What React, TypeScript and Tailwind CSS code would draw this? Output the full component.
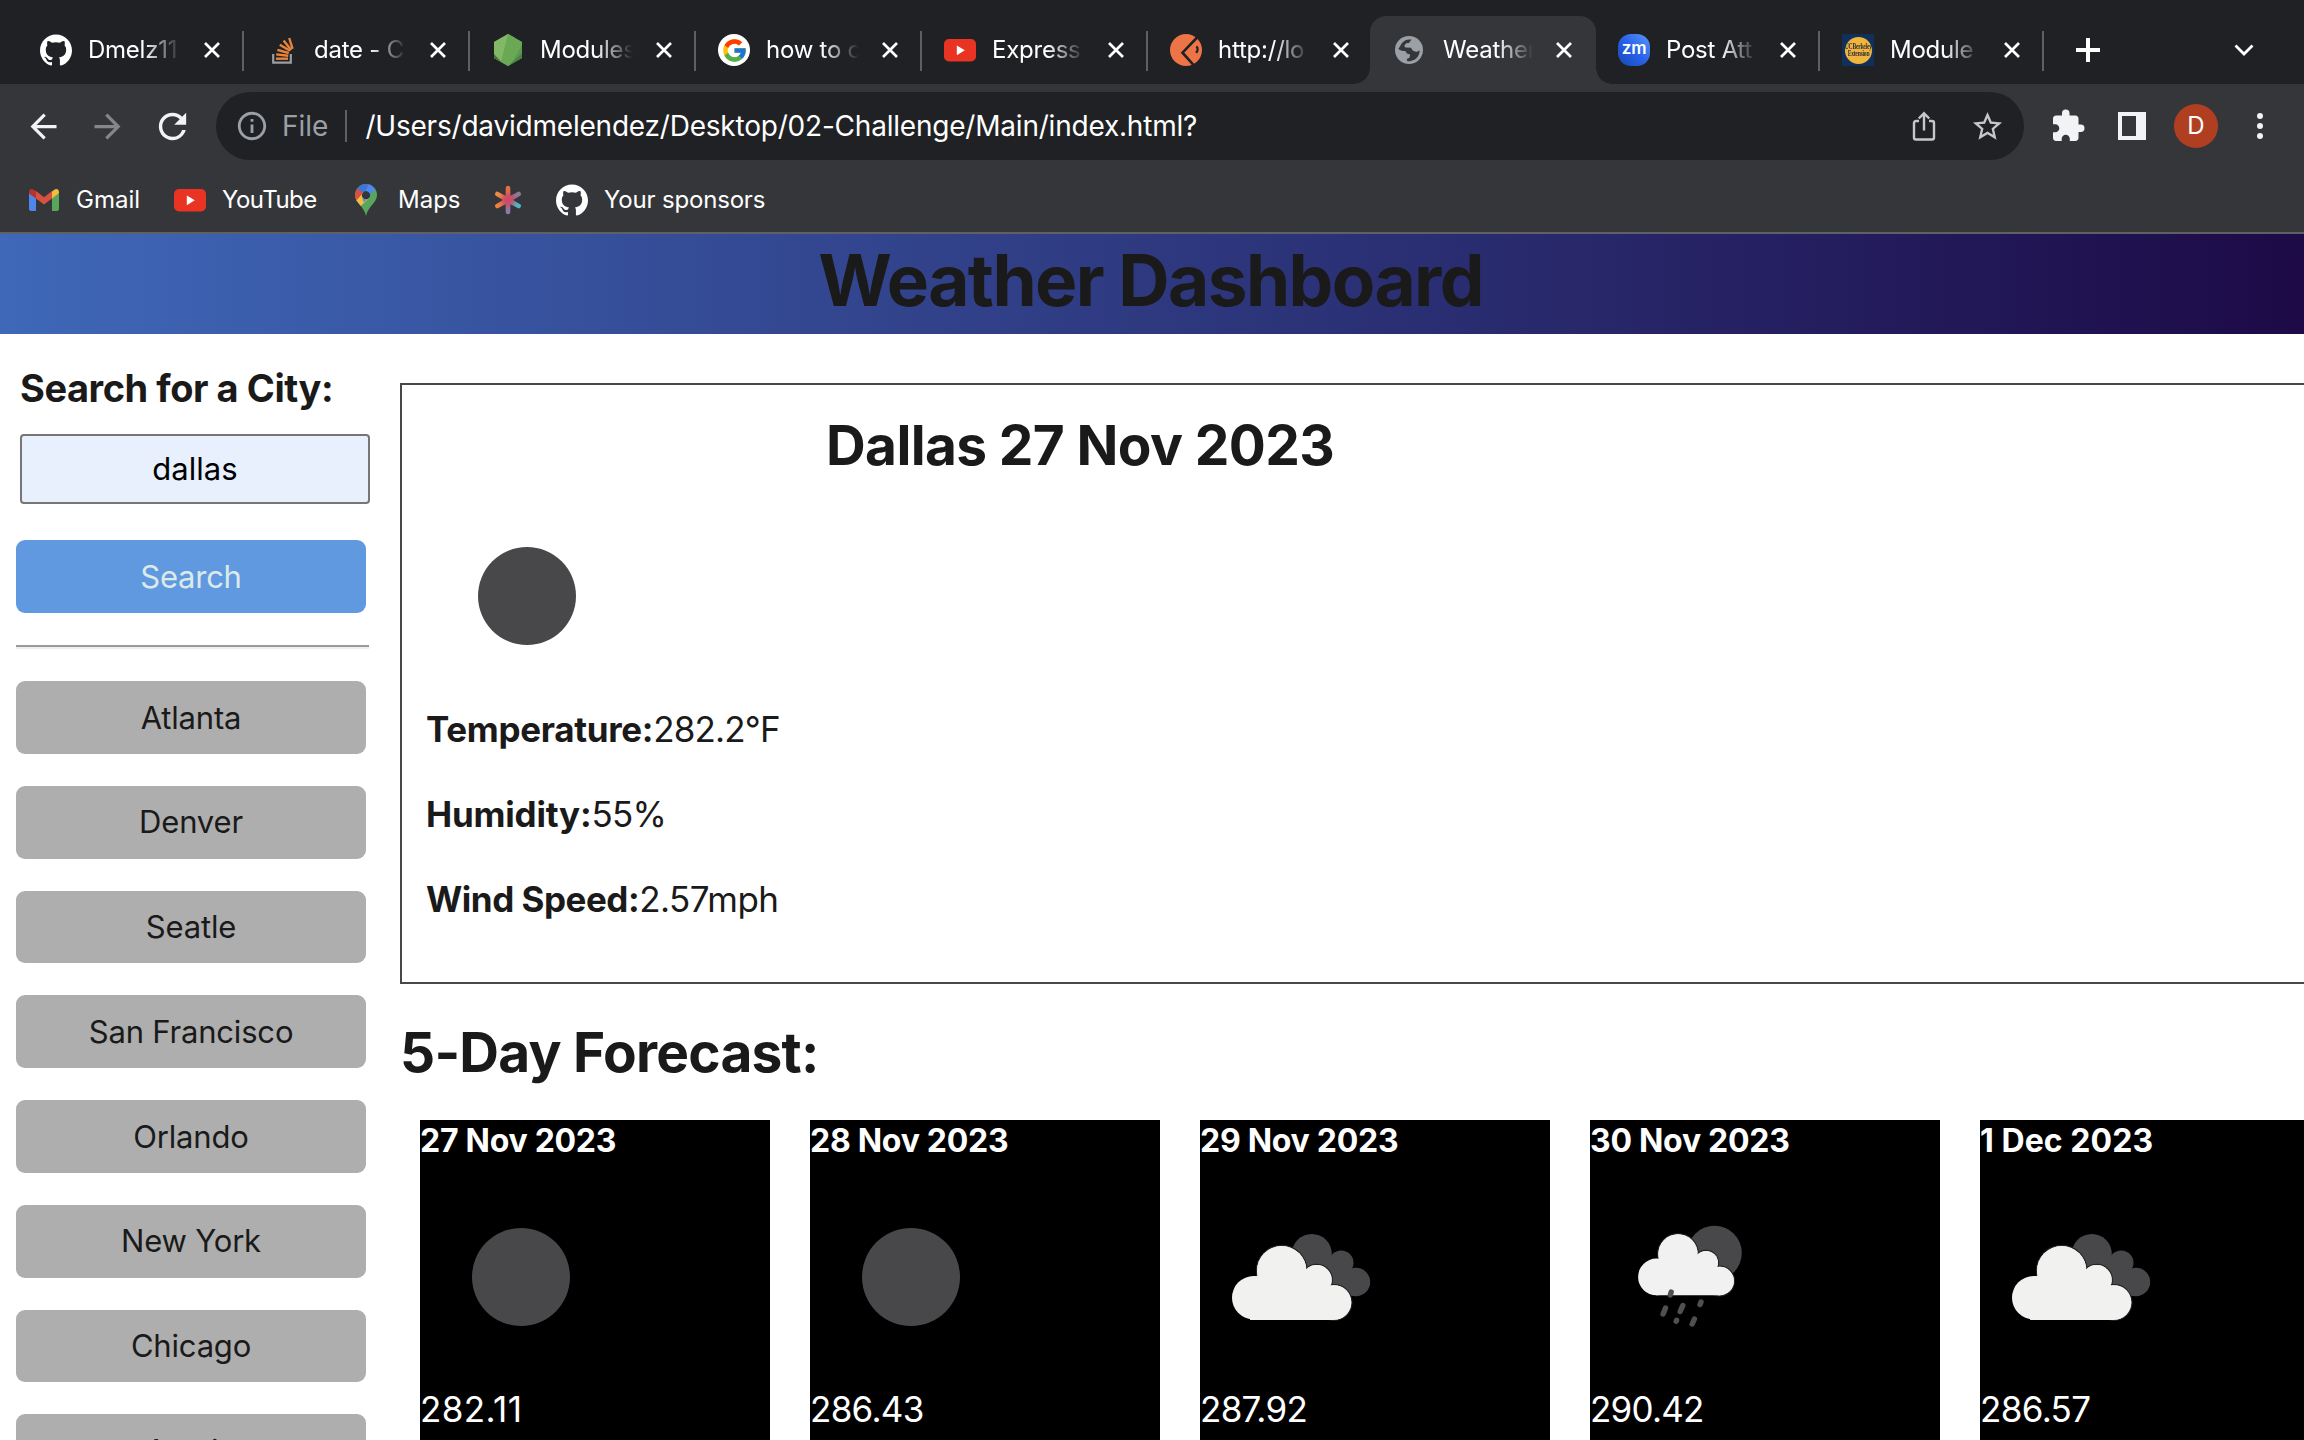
import type { ReactNode } from "react";
import { SiGithub } from "react-icons/si";
import { FcGoogle } from "react-icons/fc";
import {
  MdArrowBack,
  MdArrowForward,
  MdExtension,
  MdInfoOutline,
  MdRefresh,
  MdStarBorder,
} from "react-icons/md";

/* ---------- favicons ---------- */

function GitHubIcon() {
  return <SiGithub size={32} color="#ffffff" />;
}

function StackOverflowIcon() {
  return (
    <svg width="32" height="32" viewBox="0 0 32 32" fill="none">
      <path d="M7.2 20v8.6h17.6V20" stroke="#9a9da1" strokeWidth="2.2" />
      <g stroke="#e8843c" strokeWidth="2.4">
        <path d="M10 24.7h12" />
        <path d="M10.2 20.4l12 1.3" />
        <path d="M11.4 15.8l11.4 3.2" />
        <path d="M13.8 10.8l10.2 6" />
        <path d="M17.6 6.6l7.6 9.4" />
        <path d="M23.2 4l3.4 10.8" />
      </g>
    </svg>
  );
}

function NodeIcon() {
  return (
    <svg width="32" height="32" viewBox="0 0 32 32">
      <path d="M16 0l14 8v16l-14 8-14-8V8z" fill="#5c9a4c" />
      <path d="M16 0l7 4L9.500 28.200 2 24V8z" fill="#82b866" />
      <path d="M16 0l14 8v3L19 30.300 16 32l-7-4z" fill="#6aa856" />
      <path d="M2 20l8 8.500L2 24z" fill="#41783c" />
      <path d="M30 19v5l-14 8z" fill="#4a8543" />
    </svg>
  );
}

function GoogleIcon() {
  return (
    <span className="flex size-8 items-center justify-center rounded-full bg-white">
      <FcGoogle size={27} />
    </span>
  );
}

function YouTubeIcon() {
  return (
    <svg width="32" height="32" viewBox="0 0 32 32">
      <rect x="0" y="5" width="32" height="22.500" rx="5" fill="#e93323" />
      <path d="M12.800 11.400v9.800l8-4.900z" fill="#fff" />
    </svg>
  );
}

function PostmanIcon() {
  return (
    <svg width="32" height="32" viewBox="0 0 32 32" fill="none">
      <circle cx="16" cy="16" r="16" fill="#ec7446" />
      <path d="M29 1.500L12.500 18.700 24.500 32" stroke="#202124" strokeWidth="2.600" />
      <path d="M26.400 12.400c1.700 1.400 1.700 4.400-.4 6.400" stroke="#202124" strokeWidth="2.200" />
    </svg>
  );
}

function GlobeIcon() {
  return (
    <svg width="28" height="28" viewBox="0 0 28 28">
      <circle cx="14" cy="14" r="14" fill="#9aa0a6" />
      <path
        d="M16.500 3.600c-4-.7-7 .4-9.200 3.200C6 8.500 5 10.700 3.300 12.800c1.400 1.700 3.600 2.300 7 2.300l1.600 2.300 3.200 1-.6 3.300-2.800 1.300.7 2.300c4.800.3 9.300-1.800 11.200-6.200.6-1.500 1.100-3.100 1-4.600l-3.400 1.500-3.500-1.400-1.700-2.900-5.600-.1-1.200-1.800 2-2.600 2.800-.1z"
        fill="#35363a"
      />
    </svg>
  );
}

function ZoomIcon() {
  return (
    <span className="flex size-8 items-center justify-center rounded-[13px] bg-linear-to-bl from-[#5b97f7] via-[#2862ea] to-[#1846b4] pb-[3px] font-[Inter] text-[17px] leading-none font-semibold tracking-[-0.01em] text-white">
      zm
    </span>
  );
}

function BerkeleyIcon() {
  return (
    <span className="flex size-8 items-center justify-center bg-[#10305c]">
      <span className="flex size-[27px] flex-col items-center justify-center rounded-full bg-[#f2b53c] font-['Liberation_Serif'] text-[8px] leading-[7px] tracking-[-0.04em] whitespace-nowrap text-[#2b3040]">
        <span className="scale-x-[0.7] font-bold">UCBerkeley</span>
        <span className="scale-x-[0.7] font-bold">Extension</span>
      </span>
    </span>
  );
}

function GmailIcon() {
  return (
    <svg width="30" height="22" viewBox="0 0 30 22">
      <path d="M0 4v16a2 2 0 002 2h5V9z" fill="#4f86ec" />
      <path d="M30 4v16a2 2 0 01-2 2h-5V9z" fill="#58a55c" />
      <path d="M23 2.600V9.500l7-5.200V3c0-2.800-3-4-5-2z" fill="#f2bd42" />
      <path d="M7 9.500V2l8 6.200L23 2v7.500l-8 6z" fill="#d85140" />
      <path d="M0 3v1.300l7 5.200V2L5 1C3-.8 0 .3 0 3z" fill="#b5352a" />
    </svg>
  );
}

function MapsIcon() {
  return (
    <svg width="22" height="32" viewBox="0 0 22 32">
      <clipPath id="pin">
        <path
          clipRule="evenodd"
          d="M11 0a11 11 0 0111 11c0 8-9 11-11 21C9 22 0 19 0 11A11 11 0 0111 0zm0 7a4.200 4.200 0 100 8.400A4.200 4.200 0 0011 7z"
        />
      </clipPath>
      <g clipPath="url(#pin)">
        <rect width="22" height="32" fill="#58a55c" />
        <path d="M-2 20L11 9 7.500 7.500-2 17z" fill="#f2bd42" />
        <path d="M-2 18L8 8.200l6.500 5.800L3.500 24-2 24z" fill="#f2bd42" />
        <path d="M-2 16L2 4l6.500 4.500L0 18z" fill="#d85140" />
        <path d="M2 4.500L7 0h8l4 3.500L14 9l-3-2-3 2z" fill="#3f74d8" />
        <path d="M14 0l6.500 5L9 18.500 7 13.500z" fill="#5088ee" />
      </g>
    </svg>
  );
}

function AsteriskIcon() {
  return (
    <svg width="28" height="30" viewBox="0 0 28 30" fill="none">
      <defs>
        <radialGradient id="burst" cx="14" cy="15" r="13" gradientUnits="userSpaceOnUse">
          <stop offset="0" stopColor="#cf4a6a" />
          <stop offset=".35" stopColor="#cf4a6a" stopOpacity=".85" />
          <stop offset=".8" stopColor="#cf4a6a" stopOpacity="0" />
        </radialGradient>
      </defs>
      <g strokeLinecap="round" strokeWidth="4.600">
        <path d="M14 3v9" stroke="#e2703f" />
        <path d="M14 18v9" stroke="#8a7aa8" />
        <path d="M3.300 9l8 4.400" stroke="#ee8a3c" />
        <path d="M16.700 16.600l8 4.400" stroke="#4fb6c0" />
        <path d="M24.700 9l-8 4.400" stroke="#8a7a96" />
        <path d="M11.300 16.600l-8 4.400" stroke="#ec8040" />
      </g>
      <g stroke="url(#burst)" strokeLinecap="round" strokeWidth="4.600">
        <path d="M14 3v9M14.010 12l-.020 15" />
        <path d="M3.300 9l21.400 12" />
        <path d="M24.700 9L3.300 21" />
      </g>
    </svg>
  );
}

function CloseIcon() {
  return (
    <svg width="16" height="16" viewBox="0 0 16 16" stroke="#fff" strokeWidth="2.700">
      <path d="M1 1l14 14M15 1L1 15" />
    </svg>
  );
}

/* ---------- browser chrome ---------- */

type TabInfo = { title: string; icon: ReactNode; width: string; active?: boolean; sep?: boolean };

const tabs: TabInfo[] = [
  { title: "Dmelz11", icon: <GitHubIcon />, width: "w-[226px]", sep: true },
  { title: "date - C", icon: <StackOverflowIcon />, width: "w-[226px]", sep: true },
  { title: "Modules", icon: <NodeIcon />, width: "w-[226px]", sep: true },
  { title: "how to c", icon: <GoogleIcon />, width: "w-[226px]", sep: true },
  { title: "Express", icon: <YouTubeIcon />, width: "w-[226px]", sep: true },
  { title: "http://lo", icon: <PostmanIcon />, width: "w-[225px]" },
  { title: "Weather", icon: <GlobeIcon />, width: "w-[223px]", active: true },
  { title: "Post Att", icon: <ZoomIcon />, width: "w-[224px]", sep: true },
  { title: "Module", icon: <BerkeleyIcon />, width: "w-[224px]", sep: true },
];

function Tab({ title, icon, width, active, sep }: TabInfo) {
  return (
    <div className={`relative flex h-[68px] shrink-0 items-center pr-[23px] pl-[23px] ${width}`}>
      {active && (
        <>
          <span className="absolute inset-y-0 -right-px -left-[2px] rounded-t-[16px] bg-[#35363a]" />
          <span className="absolute bottom-0 -left-[18px] size-4 [background:radial-gradient(circle_at_0_0,transparent_15.5px,#35363a_16px)]" />
          <span className="absolute -right-[17px] bottom-0 size-4 [background:radial-gradient(circle_at_100%_0,transparent_15.5px,#35363a_16px)]" />
        </>
      )}
      <span className="relative flex w-8 shrink-0">{icon}</span>
      <span className="relative mr-[23px] ml-4 min-w-0 flex-1 overflow-hidden pb-px text-[24px] leading-8 tracking-[-0.01em] whitespace-nowrap text-white [mask-image:linear-gradient(to_right,black_60%,transparent)]">
        {title}
      </span>
      <span className="relative shrink-0">
        <CloseIcon />
      </span>
      {sep && <span className="absolute top-[15px] -right-px h-10 w-[2px] bg-[#5f6063]" />}
    </div>
  );
}

function TabStrip() {
  return (
    <div className="flex h-[84px] items-end bg-[#202124] pl-[17px]">
      {tabs.map((t) => (
        <Tab key={t.title} {...t} />
      ))}
      <div className="ml-[33px] flex h-[68px] items-center">
        <svg width="24" height="24" viewBox="0 0 24 24" stroke="#fff" strokeWidth="4">
          <path d="M12 0v24M0 12h24" />
        </svg>
      </div>
      <div className="mr-[50px] ml-auto flex h-[68px] items-center">
        <svg width="20" height="14" viewBox="0 0 20 14" fill="none" stroke="#fff" strokeWidth="2.800">
          <path d="M1.500 2.500l8.500 8.500 8.500-8.500" />
        </svg>
      </div>
    </div>
  );
}

function Toolbar() {
  return (
    <div className="flex h-[84px] items-center bg-[#35363a]">
      <MdArrowBack className="ml-6 shrink-0" size={39} color="#f1f3f4" />
      <MdArrowForward className="ml-[25px] shrink-0" size={39} color="#85868a" />
      <MdRefresh className="ml-[25px] shrink-0" size={41} color="#f1f3f4" />
      <div className="ml-[23px] flex h-[68px] w-[1808px] shrink-0 items-center rounded-full bg-[#202124] pl-[19px]">
        <MdInfoOutline size={34} color="#9aa0a6" />
        <span className="ml-[13px] text-[28px] leading-9 text-[#9aa0a6]">File</span>
        <span className="ml-[17px] h-8 w-[2px] bg-[#5f6063]" />
        <span className="ml-[18px] text-[28px] leading-9 tracking-[-0.0075em] text-white">
          /Users/davidmelendez/Desktop/02-Challenge/Main/index.html?
        </span>
        <svg className="mr-[34px] ml-auto" width="24" height="30" viewBox="0 0 24 30" fill="none" stroke="#c6c7c8" strokeWidth="2.400">
          <path d="M7 10H4a2 2 0 00-2 2v14.500a2 2 0 002 2h16a2 2 0 002-2V12a2 2 0 00-2-2h-3" />
          <path d="M12 19.500V2.500M6.800 7.500L12 2.300l5.200 5.200" />
        </svg>
        <MdStarBorder className="mr-[19px]" size={35} color="#c6c7c8" />
      </div>
      <MdExtension className="ml-[26px] shrink-0" size={36} color="#f1f3f4" />
      <svg className="ml-[32px] shrink-0" width="28" height="28" viewBox="0 0 28 28">
        <path fillRule="evenodd" d="M0 0h28v28H0zM4 4v20h14V4z" fill="#f1f3f4" />
      </svg>
      <span className="ml-7 flex size-11 shrink-0 items-center justify-center rounded-full bg-[#b03f21] text-[24px] leading-none text-white">
        D
      </span>
      <svg className="ml-[39px] shrink-0" width="6" height="28" viewBox="0 0 6 28" fill="#f1f3f4">
        <circle cx="3" cy="4" r="3" />
        <circle cx="3" cy="14" r="3" />
        <circle cx="3" cy="24" r="3" />
      </svg>
    </div>
  );
}

function Bookmark({ icon, label, className }: { icon: ReactNode; label?: string; className: string }) {
  return (
    <div className={`flex items-center ${className}`}>
      {icon}
      {label && <span className="text-[24px] leading-8 text-white">{label}</span>}
    </div>
  );
}

function BookmarkBar() {
  return (
    <div className="flex h-[66px] items-center border-b-2 border-[#5f6063] bg-[#35363a] pl-[29px]">
      <Bookmark className="w-[145px] gap-[17px]" icon={<GmailIcon />} label="Gmail" />
      <Bookmark className="w-[181px] gap-4 tracking-[-0.033em]" icon={<YouTubeIcon />} label="YouTube" />
      <Bookmark className="w-[139px] gap-[21px]" icon={<MapsIcon />} label="Maps" />
      <Bookmark className="w-[62px]" icon={<AsteriskIcon />} />
      <Bookmark className="gap-4 tracking-[-0.011em]" icon={<GitHubIcon />} label="Your sponsors" />
    </div>
  );
}

/* ---------- weather page ---------- */

const cities = ["Atlanta", "Denver", "Seatle", "San Francisco", "Orlando", "New York", "Chicago", "Austin"];

function Sidebar() {
  return (
    <aside className="w-[400px] shrink-0 pt-[31px]">
      <h2 className="ml-5 text-[38px] leading-[46px] font-bold tracking-[-0.012em]">Search for a City:</h2>
      <div className="mt-[23px] ml-5 flex h-[70px] w-[350px] items-center justify-center rounded-[4px] border-2 border-[#767676] bg-[#e8f0fe] pt-px text-[31px] tracking-[0.002em] text-black">
        dallas
      </div>
      <button className="mt-9 ml-4 block h-[73px] w-[350px] rounded-[9px] bg-[#6099e0] pt-px text-[31px] tracking-[-0.008em] text-[#dce9e9]">
        Search
      </button>
      <div className="mt-8 ml-4 h-[4px] w-[353px] border-t-2 border-b-2 border-t-[#9a9a9a] border-b-[#eeeeee]" />
      {cities.map((c) => (
        <button
          key={c}
          className="mt-8 ml-4 block h-[72.750px] w-[350px] rounded-[9px] bg-[#aeaeae] pt-px text-[31px] tracking-[-0.006em]"
        >
          {c}
        </button>
      ))}
    </aside>
  );
}

function MoonIcon() {
  return (
    <svg width="200" height="200" viewBox="0 0 200 200">
      <circle cx="100" cy="100" r="49" fill="#48484a" />
    </svg>
  );
}

function CloudsIcon() {
  return (
    <svg width="200" height="200" viewBox="0 0 200 200">
      <g fill="#48484a">
        <circle cx="110.800" cy="77" r="20" />
        <circle cx="140.200" cy="85.700" r="12.300" />
        <circle cx="155" cy="105" r="14.200" />
        <path d="M111 77l30 5 14 23-2 14-42-2z" />
      </g>
      <g fill="#f1f1ef" stroke="#222" strokeWidth="2.400" paintOrder="stroke">
        <circle cx="80.700" cy="93.700" r="24.700" />
        <circle cx="115.700" cy="103" r="15" />
        <circle cx="133" cy="125.500" r="17.300" />
      </g>
      <path
        d="M52.700 120.700V99.200l4-.2 24-5.300h20l5 8h10l14 8 3.300 16.300v17H49z"
        fill="#f1f1ef"
      />
      <g fill="#f1f1ef">
        <circle cx="52.700" cy="120.700" r="21.700" />
        <circle cx="80.700" cy="93.700" r="24.700" />
        <circle cx="115.700" cy="103" r="15" />
        <circle cx="133" cy="125.500" r="17.300" />
      </g>
    </svg>
  );
}

function RainIcon() {
  return (
    <svg width="200" height="200" viewBox="0 0 200 200">
      <circle cx="123.500" cy="76" r="27.300" fill="#48484a" />
      <g fill="#f1f1f1" stroke="#222" strokeWidth="2.400" paintOrder="stroke">
        <circle cx="87" cy="77" r="19.700" />
        <circle cx="115" cy="86" r="12" />
        <circle cx="128.700" cy="104" r="14.200" />
      </g>
      <g fill="#f1f1f1">
        <circle cx="65.500" cy="99.900" r="18.400" />
        <circle cx="87" cy="77" r="19.700" />
        <circle cx="115" cy="86" r="12" />
        <circle cx="128.700" cy="104" r="14.200" />
        <path d="M65 82h12l30-2 8 6 12 8 2 10v14.300H65z" />
      </g>
      <g stroke="#505052" strokeWidth="5.400" strokeLinecap="round">
        <path d="M80.200 115l-.9 3" />
        <path d="M74.500 131l-2.400 6" />
        <path d="M91.800 128.500l-2.600 6" />
        <path d="M110 125l-1 2.500" />
        <path d="M85.600 143.300l-.4 1" />
        <path d="M103.400 142l-2.200 5" />
      </g>
    </svg>
  );
}

const forecast = [
  { date: "27 Nov 2023", icon: <MoonIcon />, temp: "282.11", track: "tracking-[0.012em]" },
  { date: "28 Nov 2023", icon: <MoonIcon />, temp: "286.43", track: "tracking-[-0.020em]" },
  { date: "29 Nov 2023", icon: <CloudsIcon />, temp: "287.92", track: "tracking-[-0.020em]" },
  { date: "30 Nov 2023", icon: <RainIcon />, temp: "290.42", track: "tracking-[-0.022em]" },
  { date: "1 Dec 2023", icon: <CloudsIcon />, temp: "286.57", track: "tracking-[-0.018em]" },
];

function CurrentWeather() {
  return (
    <section className="mt-[49px] h-[601px] border-2 border-r-0 border-[#48484a] pt-[27px] pl-6">
      <h2 className="ml-[400px] text-[55px] leading-[66px] font-bold tracking-[-0.0115em]">Dallas 27 Nov 2023</h2>
      <div className="mt-[18px] ml-px h-[200px]">
        <MoonIcon />
      </div>
      <div className="mt-3 flex flex-col gap-[43px] text-[35px] leading-[42px]">
        <p>
          <b className="tracking-[-0.009em]">Temperature:</b>
          <span className="tracking-[-0.024em]">282.2°F</span>
        </p>
        <p>
          <b className="tracking-[-0.006em]">Humidity:</b>
          <span className="tracking-[-0.02em]">55%</span>
        </p>
        <p>
          <b className="tracking-[-0.0135em]">Wind Speed:</b>
          <span className="tracking-[-0.015em]">2.57mph</span>
        </p>
      </div>
    </section>
  );
}

function Forecast() {
  return (
    <section className="mt-[35px]">
      <h2 className="text-[55px] leading-[66px] font-bold tracking-[-0.014em]">5-Day Forecast:</h2>
      <div className="mt-[35px] ml-5 flex gap-10">
        {forecast.map((f) => (
          <div key={f.date} className="h-[400px] w-[350px] shrink-0 bg-black text-white">
            <h3
              className={`text-[32px] leading-[41px] font-bold ${
                f.date.startsWith("1 ") ? "tracking-[0.002em]" : "tracking-[-0.0085em]"
              }`}
            >
              {f.date}
            </h3>
            <div className="mt-4 ml-px h-[200px]">{f.icon}</div>
            <p className={`mt-[11px] text-[35px] leading-[42px] ${f.track}`}>{f.temp}</p>
          </div>
        ))}
      </div>
    </section>
  );
}

export default function App() {
  return (
    <div className="h-[1440px] w-[2304px] overflow-hidden bg-white font-[Inter,sans-serif] text-[#1a1a1a]">
      <TabStrip />
      <Toolbar />
      <BookmarkBar />
      <header className="h-[100px] bg-linear-[90deg,#3f68b8,#1d0a47]">
        <h1 className="pr-[3px] text-center text-[71px] leading-[92px] font-bold tracking-[-0.0221em]">
          Weather Dashboard
        </h1>
      </header>
      <div className="flex">
        <Sidebar />
        <main className="w-[1904px] shrink-0 overflow-hidden">
          <CurrentWeather />
          <Forecast />
        </main>
      </div>
    </div>
  );
}
